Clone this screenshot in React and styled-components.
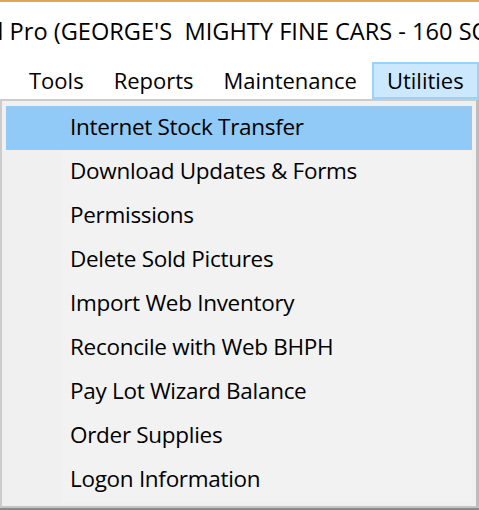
import React from "react";
import styled, { createGlobalStyle } from "styled-components";

const Global = createGlobalStyle`
  html, body { margin: 0; padding: 0; background: #ffffff; }
  body { width: 479px; height: 510px; overflow: hidden; font-family: "Open Sans", "Noto Sans", sans-serif; color: #000; }
`;

const Window = styled.div`
  width: 479px;
  height: 510px;
  display: flex;
  flex-direction: column;
  overflow: hidden;
  background: #ffffff;
`;

const Accent = styled.div`
  height: 2px;
  background: #e2a458;
  flex: none;
`;

const TitleRow = styled.div`
  height: 57px;
  flex: none;
  display: flex;
  align-items: center;
  overflow: hidden;
  padding-top: 1px;
  box-sizing: border-box;
`;

const TitleText = styled.span`
  white-space: pre;
  font-size: 23.6px;
  margin-left: -11px;
`;

const MenuBar = styled.div`
  height: 40px;
  flex: none;
  display: flex;
  align-items: flex-end;
  padding-left: 14px;
  box-sizing: border-box;
`;

const MenuItem = styled.div`
  height: 37px;
  display: flex;
  align-items: center;
  padding: 0 13px 1px;
  font-size: 22px;
  box-sizing: border-box;
  border: 2px solid ${(p) => (p.$active ? "#99d1ff" : "transparent")};
  background: ${(p) => (p.$active ? "#cce8ff" : "transparent")};
`;

const Dropdown = styled.div`
  flex: none;
  height: 409px;
  box-sizing: border-box;
  border-top: 2px solid #cccccc;
  border-left: 2px solid #cccccc;
  border-right: 3px solid #bdbdbd;
  border-bottom: 2px solid #c4c4c4;
  background: #f0f0f0;
  padding: 5px 4px 0 4px;
`;

const Item = styled.div`
  height: 44px;
  display: flex;
  background: ${(p) => (p.$hover ? "#91c9f7" : "transparent")};
`;

const Gutter = styled.div`
  width: 56px;
  flex: none;
`;

const Label = styled.div`
  flex: 1;
  display: flex;
  align-items: center;
  padding: 0 0 3px 8px;
  font-size: 22.5px;
  letter-spacing: -0.3px;
  background: ${(p) => (p.$hover ? "#91c9f7" : "#f2f2f2")};
`;

const Under = styled.div`
  flex: 1;
  background: #8a8a8a;
`;

const items = [
  "Internet Stock Transfer",
  "Download Updates & Forms",
  "Permissions",
  "Delete Sold Pictures",
  "Import Web Inventory",
  "Reconcile with Web BHPH",
  "Pay Lot Wizard Balance",
  "Order Supplies",
  "Logon Information",
];

export default function App() {
  return (
    <Window>
      <Global />
      <Accent />
      <TitleRow>
        <TitleText>{"d Pro (GEORGE'S  MIGHTY FINE CARS - 160 SO"}</TitleText>
      </TitleRow>
      <MenuBar>
        <MenuItem>Tools</MenuItem>
        <MenuItem>Reports</MenuItem>
        <MenuItem>Maintenance</MenuItem>
        <MenuItem $active>Utilities</MenuItem>
      </MenuBar>
      <Dropdown>
        {items.map((t, i) => (
          <Item key={t} $hover={i === 0}>
            <Gutter />
            <Label $hover={i === 0}>{t}</Label>
          </Item>
        ))}
      </Dropdown>
      <Under />
    </Window>
  );
}
